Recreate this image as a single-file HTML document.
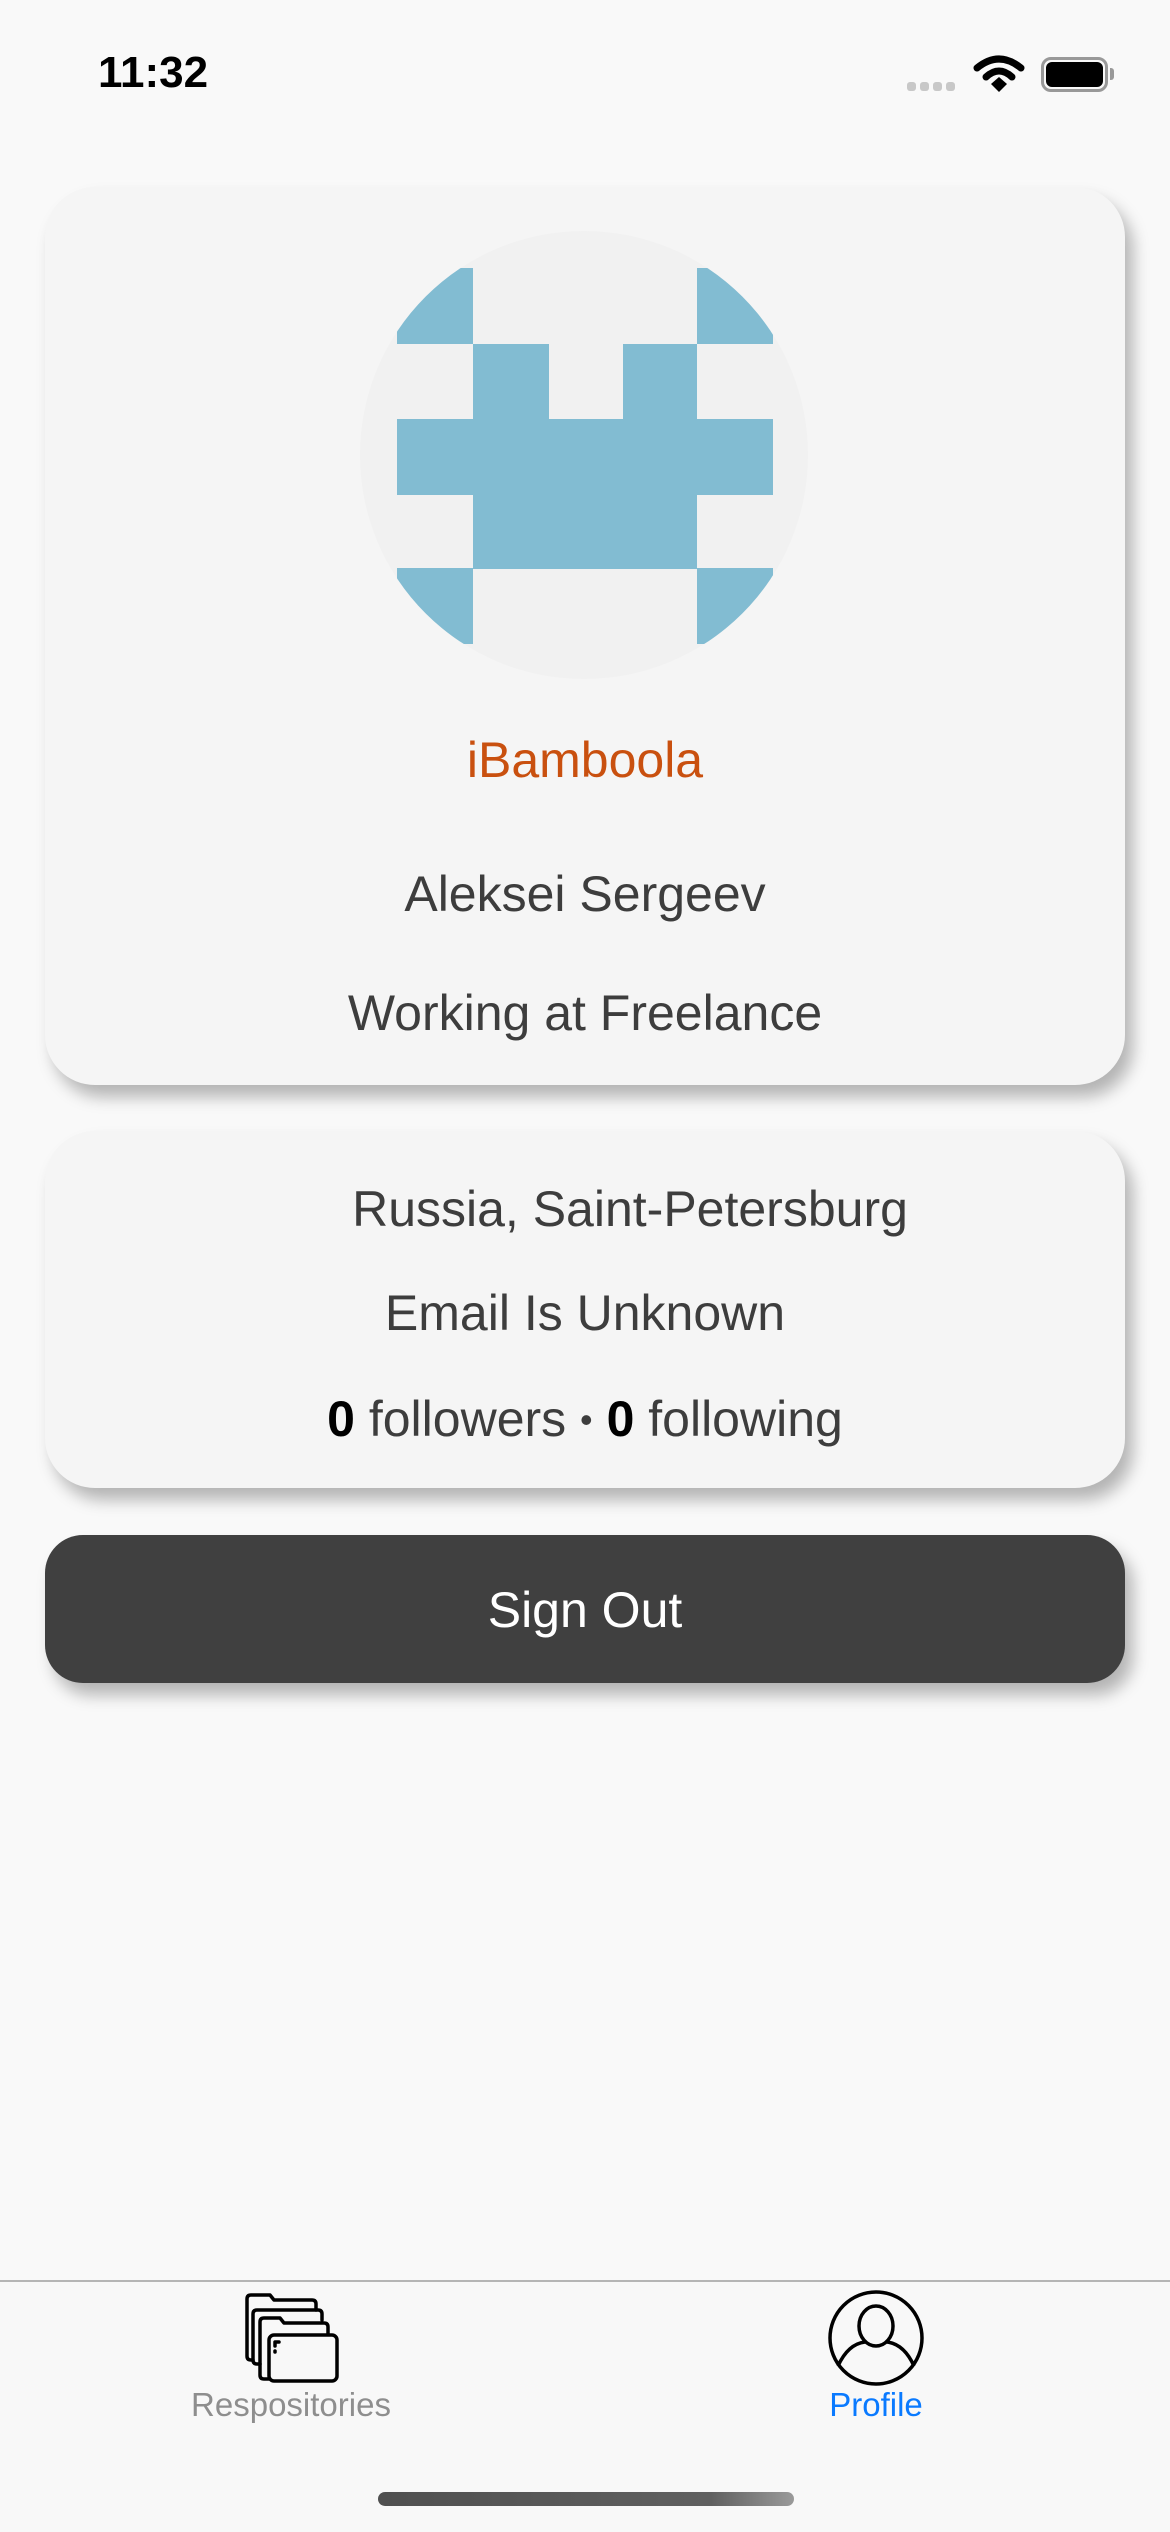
<!DOCTYPE html>
<html><head><meta charset="utf-8">
<style>
*{margin:0;padding:0;box-sizing:border-box}
html,body{width:1170px;height:2532px;overflow:hidden;background:#f9f9f9;font-family:"Liberation Sans",sans-serif}
.abs{position:absolute}
.card{position:absolute;left:45px;width:1080px;background:#f5f5f5;border-radius:50px;box-shadow:8px 12px 16px rgba(0,0,0,0.28)}
.t{position:absolute;left:0;width:1170px;text-align:center;color:#3d3d3d;font-size:50px;line-height:58px}
</style></head><body>
<div class="abs" style="left:98px;top:48px;font-size:44px;font-weight:bold;color:#000">11:32</div>
<div class="abs" style="left:907px;top:82px;width:9px;height:9px;border-radius:3px;background:#c8c8c8"></div>
<div class="abs" style="left:920px;top:82px;width:9px;height:9px;border-radius:3px;background:#c8c8c8"></div>
<div class="abs" style="left:933px;top:82px;width:9px;height:9px;border-radius:3px;background:#c8c8c8"></div>
<div class="abs" style="left:946px;top:82px;width:9px;height:9px;border-radius:3px;background:#c8c8c8"></div>
<svg class="abs" style="left:973px;top:54px" width="52" height="40" viewBox="0 0 52 40">
<path d="M4 14 Q26 -4 48 14" stroke="#000" stroke-width="7" fill="none" stroke-linecap="round"/>
<path d="M13 23 Q26 11 39 23" stroke="#000" stroke-width="7" fill="none" stroke-linecap="round"/>
<path d="M18 30 L26 23 L34 30 L26 38Z" fill="#000"/>
</svg>
<div class="abs" style="left:1041px;top:57px;width:67px;height:35px;border:3px solid #999;border-radius:10px"></div>
<div class="abs" style="left:1046px;top:62px;width:57px;height:25px;background:#000;border-radius:6px"></div>
<div class="abs" style="left:1110px;top:68px;width:4px;height:12px;background:#999;border-radius:0 3px 3px 0"></div>

<div class="card" style="top:187px;height:898px"></div>
<svg class="abs" style="left:360px;top:231px" width="448" height="448" viewBox="0 0 448 448">
<defs><clipPath id="c"><circle cx="224" cy="224" r="224"/></clipPath></defs>
<circle cx="224" cy="224" r="224" fill="#f1f1f1"/>
<g clip-path="url(#c)" fill="#82bcd2">
<rect x="37" y="37" width="76" height="76"/><rect x="337" y="37" width="76" height="76"/>
<rect x="113" y="113" width="76" height="75"/><rect x="263" y="113" width="74" height="75"/>
<rect x="37" y="188" width="376" height="76"/>
<rect x="113" y="264" width="224" height="74"/>
<rect x="37" y="337" width="76" height="76"/><rect x="337" y="337" width="76" height="76"/>
</g></svg>
<div class="t" style="top:731px;color:#c9500f">iBamboola</div>
<div class="t" style="top:865px">Aleksei Sergeev</div>
<div class="t" style="top:984px">Working at Freelance</div>

<div class="card" style="top:1131px;height:357px"></div>
<div class="t" style="top:1180px;left:45px">Russia, Saint-Petersburg</div>
<div class="t" style="top:1284px">Email Is Unknown</div>
<div class="t" style="top:1390px"><span style="color:#000;font-weight:600">0</span> followers <span style="font-size:36px;position:relative;top:-4px">•</span> <span style="color:#000;font-weight:600">0</span> following</div>

<div class="abs" style="left:45px;top:1535px;width:1080px;height:148px;background:#404040;border-radius:38px;box-shadow:8px 12px 16px rgba(0,0,0,0.28);color:#fff;font-size:50px;text-align:center;line-height:150px">Sign Out</div>

<div class="abs" style="left:0;top:2280px;width:1170px;height:252px;background:#f8f8f8;border-top:2px solid #b5b5b5"></div>
<svg class="abs" style="left:240px;top:2290px" width="100" height="100" viewBox="0 0 100 100" fill="none" stroke="#000" stroke-width="3.5" stroke-linejoin="round" stroke-linecap="round">
<path d="M13 70 H11 Q7 70 7 66 V9 Q7 5 11 5 H30 L34 10 H72 Q76 10 76 14 V20"/>
<path d="M20 74 H17 Q13 74 13 70 V24 Q13 20 17 20 H78 Q82 20 82 24 V30"/>
<path d="M29 89 H24 Q20 89 20 85 V32 Q20 28 24 28 H40 L44 33 H84 Q88 33 88 37 V45"/>
<rect x="29" y="45" width="68" height="46" rx="5" fill="#f8f8f8"/>
<path d="M39 52 H35 V56"/>
<path d="M35 61 V62"/>
</svg>
<svg class="abs" style="left:828px;top:2290px" width="96" height="96" viewBox="0 0 96 96" fill="none" stroke="#000" stroke-width="3.5">
<circle cx="48" cy="48" r="46"/>
<ellipse cx="48" cy="36" rx="17" ry="20"/>
<path d="M10 76 Q20 54 37 52 M86 76 Q76 54 59 52"/>
</svg>
<div class="abs" style="left:141px;top:2386px;width:300px;text-align:center;font-size:33px;color:#8e8e8e">Respositories</div>
<div class="abs" style="left:726px;top:2386px;width:300px;text-align:center;font-size:33px;color:#0a7aff">Profile</div>
<div class="abs" style="left:378px;top:2492px;width:416px;height:14px;border-radius:7px;background:linear-gradient(90deg,#505050,#606060 80%,#9a9a9a)"></div>
</body></html>
